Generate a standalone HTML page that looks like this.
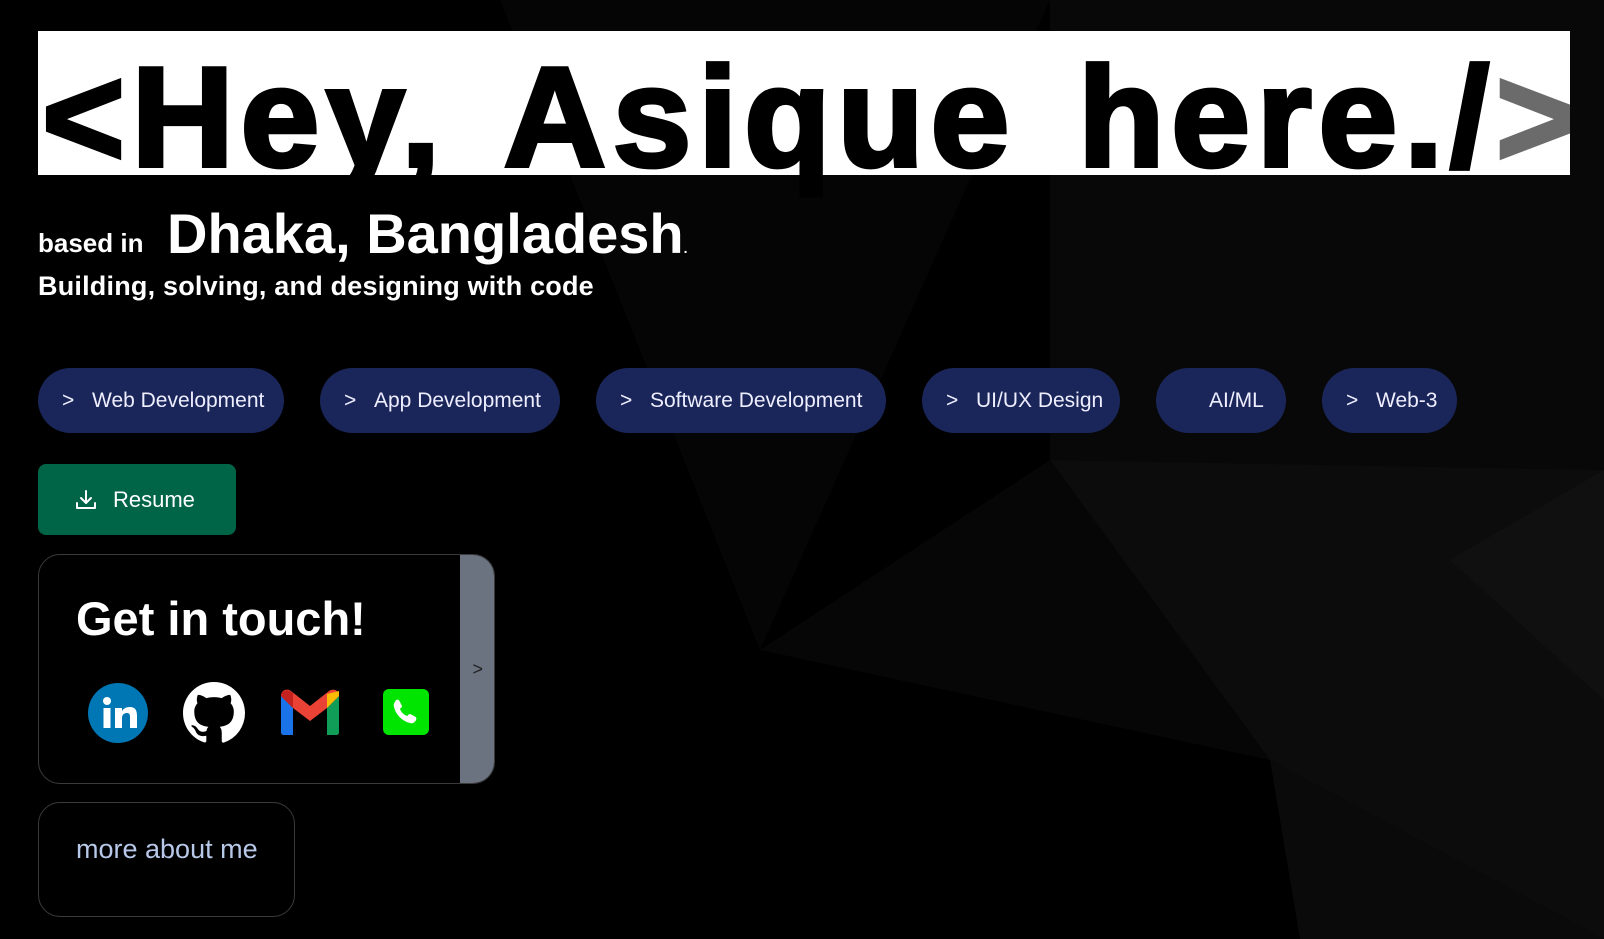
<!DOCTYPE html>
<html><head><meta charset="utf-8"><style>
*{margin:0;padding:0;box-sizing:border-box}
body{width:1604px;height:939px;background:#000;overflow:hidden;position:relative;font-family:"Liberation Sans",sans-serif;color:#fff}
.abs{position:absolute}
.hero{left:38px;top:31px;width:1532px;height:144px;background:#fff;clip-path:inset(-80px 0 -80px -20px)}
.hero span{position:absolute;left:4px;top:-8px;font-size:142px;font-weight:bold;color:#000;letter-spacing:6.5px;word-spacing:16px;-webkit-text-stroke:4px #000;white-space:nowrap;line-height:190px}
.pill{position:absolute;top:368px;height:65px;border-radius:33px;background:#1a2659;color:#eef;font-size:21px;line-height:65px;white-space:nowrap}
.pill b{font-weight:normal;position:absolute;top:0}
.pill i{font-style:normal;position:absolute;top:0}
</style></head><body>
<svg class="abs" style="left:0;top:0" width="1604" height="939">
<polygon points="500,0 1050,0 760,650" fill="#050505"/>
<polygon points="1050,0 1604,0 1604,470 1050,460" fill="#080808"/>
<polygon points="1050,460 1604,470 1604,939 1270,760" fill="#0c0c0c"/>
<polygon points="1050,460 1270,760 760,650" fill="#060606"/>
<polygon points="1270,760 1604,939 1300,939" fill="#0a0a0a"/>
<polygon points="1604,470 1604,700 1450,560" fill="#101010"/>
</svg>
<div class="abs hero"><span>&lt;Hey, Asique here./<span style="position:static;color:#6b6b6b;-webkit-text-stroke:4px #6b6b6b">&gt;</span></span></div>
<div class="abs" style="left:38px;top:228px;font-size:26px;font-weight:bold">based in</div>
<div class="abs" style="left:167px;top:204px;font-size:56px;font-weight:bold;line-height:60px">Dhaka, Bangladesh<span style="font-size:14px">.</span></div>
<div class="abs" style="left:38px;top:271px;font-size:27px;font-weight:bold;letter-spacing:0.2px">Building, solving, and designing with code</div>

<div class="pill" style="left:38px;width:246px"><b style="left:24px">&gt;</b><i style="left:54px">Web Development</i></div>
<div class="pill" style="left:320px;width:240px"><b style="left:24px">&gt;</b><i style="left:54px">App Development</i></div>
<div class="pill" style="left:596px;width:290px"><b style="left:24px">&gt;</b><i style="left:54px">Software Development</i></div>
<div class="pill" style="left:922px;width:198px"><b style="left:24px">&gt;</b><i style="left:54px">UI/UX Design</i></div>
<div class="pill" style="left:1156px;width:130px"><i style="left:53px">AI/ML</i></div>
<div class="pill" style="left:1322px;width:135px"><b style="left:24px">&gt;</b><i style="left:54px">Web-3</i></div>

<div class="abs" style="left:38px;top:464px;width:198px;height:71px;background:#006446;border-radius:8px;font-size:22px;line-height:71px">
<svg class="abs" style="left:36px;top:24px" width="24" height="24" viewBox="0 0 24 24" fill="none" stroke="#fff" stroke-width="2" stroke-linecap="round" stroke-linejoin="round"><path d="M12 3v12M7 10l5 5 5-5M3 15v5h18v-5"/></svg>
<span class="abs" style="left:75px">Resume</span></div>

<div class="abs" style="left:38px;top:554px;width:457px;height:230px;border:1px solid #3a3a3a;border-radius:22px;overflow:hidden;background:#000">
<div class="abs" style="right:0;top:0;width:34px;height:100%;background:#6b7280"></div>
<div class="abs" style="right:11px;top:104px;color:#222;font-size:18px">&gt;</div>
<div class="abs" style="left:37px;top:36px;font-size:47px;font-weight:bold">Get in touch!</div>
<svg class="abs" style="left:48px;top:127px" width="62" height="62" viewBox="0 0 62 62"><circle cx="31" cy="31" r="30" fill="#0077b5"/><circle cx="20" cy="19" r="4" fill="#fff"/><rect x="16.5" y="26" width="7" height="20" fill="#fff"/><path d="M28 26h7v3c2-3 5-4 8-4 5 0 7 3 7 9v12h-7V35c0-3-1-4-3-4s-5 1-5 5v10h-7z" fill="#fff"/></svg>
<svg class="abs" style="left:144px;top:127px" width="62" height="62" viewBox="0 0 16 16"><path fill="#fff" d="M8 0C3.58 0 0 3.58 0 8c0 3.54 2.29 6.53 5.47 7.59.4.07.55-.17.55-.38v-1.33c-2.23.48-2.7-1.07-2.7-1.07-.36-.92-.89-1.17-.89-1.17-.73-.5.06-.49.06-.49.8.06 1.230.83 1.23.83.71 1.22 1.87.87 2.33.66.07-.52.28-.87.5-1.07-1.78-.2-3.64-.89-3.64-3.95 0-.87.31-1.59.82-2.15-.08-.2-.36-1.02.08-2.12 0 0 .67-.21 2.2.82.64-.18 1.32-.27 2-.27.68 0 1.36.09 2 .27 1.53-1.04 2.2-.82 2.2-.82.44 1.1.16 1.92.08 2.12.51.56.82 1.27.82 2.15 0 3.07-1.87 3.75-3.65 3.95.29.25.54.73.54 1.48v2.2c0 .21.15.46.55.38A8.013 8.013 0 0016 8c0-4.42-3.58-8-8-8z"/></svg>
<svg class="abs" style="left:240px;top:133px" width="62" height="48" viewBox="0 0 62 48"><path d="M2 8v36c0 2 1 3 3 3h9V20z" fill="#1a73e8"/><path d="M48 20v27h9c2 0 3-1 3-3V8z" fill="#0f9d58"/><path d="M2 8l12 12 17 13 17-13 12-12c0-6-6-8-10-5L31 18 12 3C8 0 2 2 2 8z" fill="#ea4335"/><path d="M48 6l12-3v5L48 20z" fill="#fbbc04"/><path d="M2 8c0-5 5-7 9-5l3 2v15z" fill="#c5221f"/></svg>
<svg class="abs" style="left:344px;top:134px" width="46" height="46" viewBox="0 0 46 46"><rect width="46" height="46" rx="6" fill="#00e500"/><path d="M13 11c2-1 3 0 4 2l2 4c0 2-2 2-2 3 1 3 4 6 7 7 1 0 1-2 3-2l4 2c2 1 3 2 2 4-1 2-3 4-6 3-8-2-14-8-16-16-1-3 1-5 2-7z" fill="#fff"/></svg>
</div>

<div class="abs" style="left:38px;top:802px;width:257px;height:115px;border:1px solid #3a3a3a;border-radius:22px">
<div class="abs" style="left:37px;top:31px;font-size:27px;color:#b8c8e8">more about me</div></div>
</body></html>
